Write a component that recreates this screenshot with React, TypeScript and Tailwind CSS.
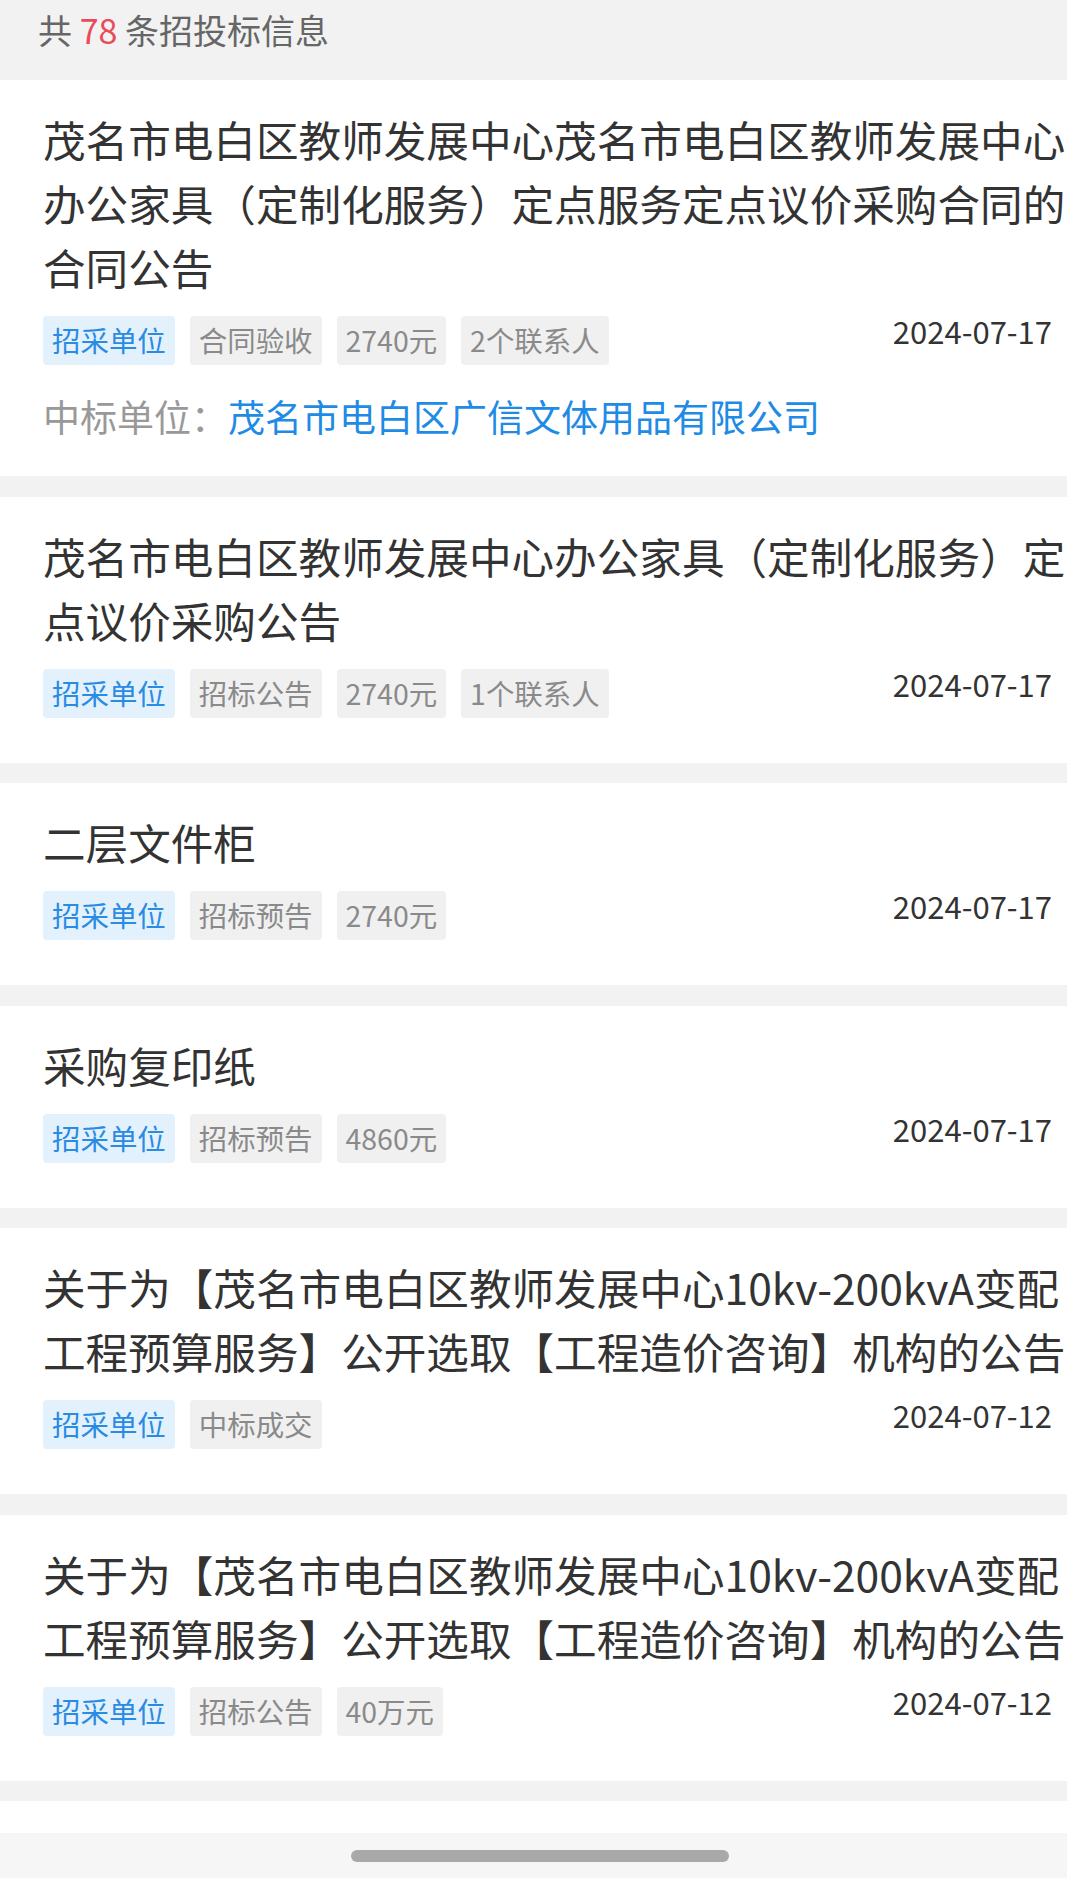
import React from 'react';

type Item = {
  title: string;
  tags: string[];
  date: string;
  winner?: string;
};

const items: Item[] = [
  {
    title: '茂名市电白区教师发展中心茂名市电白区教师发展中心办公家具（定制化服务）定点服务定点议价采购合同的合同公告',
    tags: ['合同验收', '2740元', '2个联系人'],
    date: '2024-07-17',
    winner: '茂名市电白区广信文体用品有限公司',
  },
  {
    title: '茂名市电白区教师发展中心办公家具（定制化服务）定点议价采购公告',
    tags: ['招标公告', '2740元', '1个联系人'],
    date: '2024-07-17',
  },
  {
    title: '二层文件柜',
    tags: ['招标预告', '2740元'],
    date: '2024-07-17',
  },
  {
    title: '采购复印纸',
    tags: ['招标预告', '4860元'],
    date: '2024-07-17',
  },
  {
    title: '关于为【茂名市电白区教师发展中心10kv-200kvA变配工程预算服务】公开选取【工程造价咨询】机构的公告',
    tags: ['中标成交'],
    date: '2024-07-12',
  },
  {
    title: '关于为【茂名市电白区教师发展中心10kv-200kvA变配工程预算服务】公开选取【工程造价咨询】机构的公告',
    tags: ['招标公告', '40万元'],
    date: '2024-07-12',
  },
];

const TenderCard: React.FC<{ item: Item }> = ({ item }) => (
  <div className="bg-white pl-[43px] pt-[27px] pb-[45px]">
    <h3 className="text-[42.6px] leading-[64px] text-[#333] font-normal">{item.title}</h3>
    <div className="mt-[17px] flex items-start justify-between pr-[15px]">
      <div className="flex gap-[15px]">
        <span className="h-[49px] px-[9px] flex items-center rounded-[4px] bg-[#e3f1fd] text-[#2a8be3] text-[28.45px]">
          招采单位
        </span>
        {item.tags.map((tag) => (
          <span
            key={tag}
            className="h-[49px] px-[9px] flex items-center rounded-[4px] bg-[#f0f0f0] text-[#8a8a8a] text-[28.45px]"
          >
            {tag}
          </span>
        ))}
      </div>
      <span className="text-[31px] leading-[30px] text-[#333]">{item.date}</span>
    </div>
    {item.winner && (
      <p className="mt-[36px] h-[30px] text-[37px] leading-[30px] whitespace-nowrap">
        <span className="text-[#999]">中标单位：</span>
        <span className="text-[#1f8be5]">{item.winner}</span>
      </p>
    )}
  </div>
);

export default function App() {
  return (
    <div className="w-[1067px] h-[1878px] flex flex-col overflow-hidden bg-[#f2f2f2] font-['Noto_Sans_CJK_SC','Noto_Sans',sans-serif]">
      <div className="flex-1 overflow-hidden flex flex-col">
        <div className="h-[80px] shrink-0 pl-[38px] pt-[4px] text-[34px] leading-[51px] text-[#666]">
          共 <span className="text-[#e94b5b]">78</span> 条招投标信息
        </div>
        <div className="flex flex-col gap-[20.5px]">
          {items.map((item, i) => (
            <TenderCard key={i} item={item} />
          ))}
          <div className="bg-white h-[200px] shrink-0" />
        </div>
      </div>
      <div className="h-[45px] shrink-0 bg-[#f6f6f6] flex items-center pl-[351px]">
        <div className="w-[378px] h-[12px] rounded-full bg-[#a9a9a9] mt-[1px]" />
      </div>
    </div>
  );
}
